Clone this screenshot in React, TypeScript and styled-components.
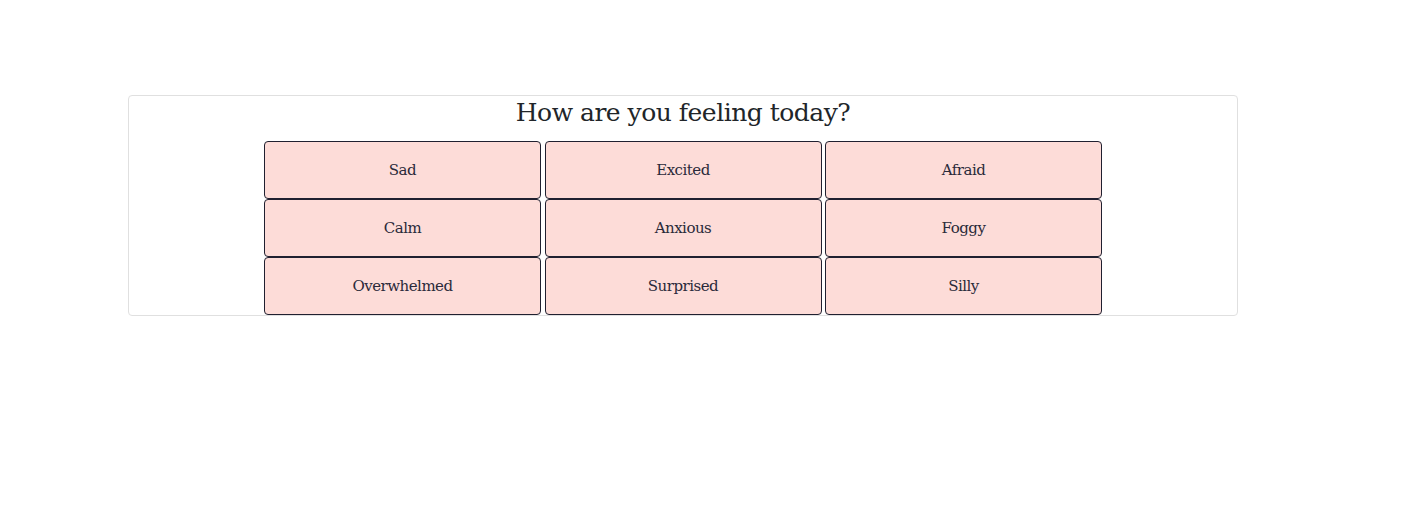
import React from "react";
import styled, { createGlobalStyle } from "styled-components";

const Global = createGlobalStyle`
  html, body { margin: 0; padding: 0; background: #ffffff; }
  body { font-family: Georgia, "DejaVu Serif", "Liberation Serif", serif; color: #212529; }
`;

const Page = styled.div`
  padding-top: 95px;
  padding-left: 128px;
`;

const Card = styled.section`
  box-sizing: border-box;
  width: 1110px;
  height: 221px;
  border: 1px solid #e0e0e0;
  border-radius: 4px;
  display: flex;
  flex-direction: column;
  align-items: center;
`;

const Title = styled.h1`
  margin: 0;
  height: 45px;
  padding-top: 1px;
  box-sizing: border-box;
  font-family: "DejaVu Serif", Georgia, serif;
  font-weight: 400;
  font-size: 25px;
  line-height: 32px;
  color: #212529;
  letter-spacing: -0.5px;
`;

const Grid = styled.div`
  display: grid;
  grid-template-columns: repeat(3, 277px);
  grid-auto-rows: 58px;
  column-gap: 3.5px;
`;

const Mood = styled.button`
  box-sizing: border-box;
  border: 1px solid #202030;
  border-radius: 4px;
  background: #fddcd8;
  color: #2a2a3a;
  font-family: "DejaVu Serif", Georgia, serif;
  font-size: 15px;
  letter-spacing: -0.5px;
  padding: 0;
  cursor: pointer;
`;

const moods = [
  "Sad", "Excited", "Afraid",
  "Calm", "Anxious", "Foggy",
  "Overwhelmed", "Surprised", "Silly",
];

export default function App() {
  return (
    <>
      <Global />
      <Page>
        <Card>
          <Title>How are you feeling today?</Title>
          <Grid>
            {moods.map((m) => (
              <Mood key={m}>{m}</Mood>
            ))}
          </Grid>
        </Card>
      </Page>
    </>
  );
}
